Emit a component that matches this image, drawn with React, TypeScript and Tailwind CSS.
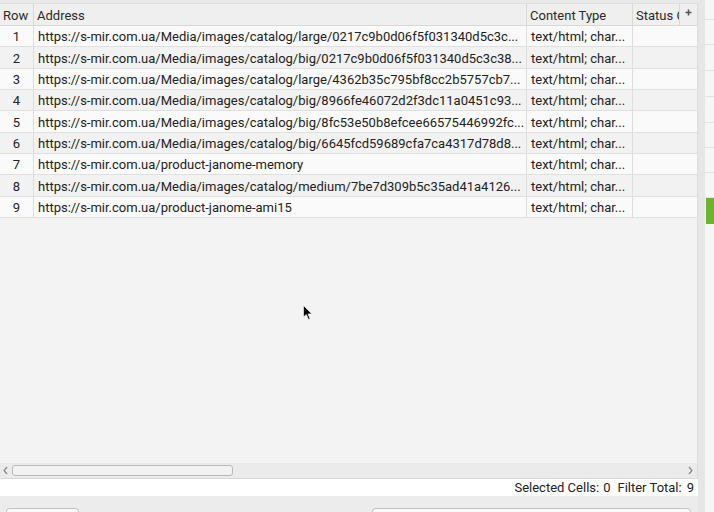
import React from "react";

const rows: { n: number; url: string; h: string }[] = [
  { n: 1, url: "https://s-mir.com.ua/Media/images/catalog/large/0217c9b0d06f5f031340d5c3c...", h: "h-[21px]" },
  { n: 2, url: "https://s-mir.com.ua/Media/images/catalog/big/0217c9b0d06f5f031340d5c3c38...", h: "h-[22px]" },
  { n: 3, url: "https://s-mir.com.ua/Media/images/catalog/large/4362b35c795bf8cc2b5757cb7...", h: "h-[21px]" },
  { n: 4, url: "https://s-mir.com.ua/Media/images/catalog/big/8966fe46072d2f3dc11a0451c93...", h: "h-[21px]" },
  { n: 5, url: "https://s-mir.com.ua/Media/images/catalog/big/8fc53e50b8efcee66575446992fc...", h: "h-[22px]" },
  { n: 6, url: "https://s-mir.com.ua/Media/images/catalog/big/6645fcd59689cfa7ca4317d78d8...", h: "h-[21px]" },
  { n: 7, url: "https://s-mir.com.ua/product-janome-memory", h: "h-[21px]" },
  { n: 8, url: "https://s-mir.com.ua/Media/images/catalog/medium/7be7d309b5c35ad41a4126...", h: "h-[22px]" },
  { n: 9, url: "https://s-mir.com.ua/product-janome-ami15", h: "h-[21px]" },
];

export default function App() {
  return (
    <div
      className="relative w-[714px] h-[512px] overflow-hidden bg-[#ececec] flex text-[13px] text-[#222]"
      style={{ fontFamily: "Roboto, 'Liberation Sans', sans-serif" }}
    >
      {/* main panel */}
      <div className="w-[698px] h-[512px] flex flex-col">
        <div className="h-[4px] shrink-0 bg-[#e9e9e9] border-b border-[#dedede]" />
        <div className="flex-1 min-h-0 flex flex-col bg-[#f3f3f3] border-r border-[#dcdcdc]">
          {/* header */}
          <div className="h-[22px] shrink-0 flex bg-[#efefef] border-b border-[#d8d8d8] text-[#2a2a2a] leading-[23px]">
            <div className="w-[34px] pl-[3px] border-r border-[#d8d8d8]">Row</div>
            <div className="w-[493px] pl-[3px] border-r border-[#d8d8d8]">Address</div>
            <div className="w-[106px] pl-[3px] border-r border-[#d8d8d8]">Content Type</div>
            <div className="w-[47px] pl-[3px] overflow-hidden whitespace-nowrap border-r border-[#d8d8d8]">Status C</div>
            <div className="flex-1 flex items-start justify-center pt-[5px]">
              <svg width="7" height="7" viewBox="0 0 7 7">
                <path d="M3.5 0.5V6.5M0.5 3.5H6.5" stroke="#555" strokeWidth="1.6" />
              </svg>
            </div>
          </div>
          {/* rows */}
          {rows.map((r) => (
            <div
              key={r.n}
              className={`${r.h} shrink-0 flex pt-[2px] border-b border-[#e0e0e0] whitespace-nowrap ${r.n % 2 === 1 ? "bg-[#fafafa]" : "bg-[#f2f2f2]"}`}
            >
              <div className="w-[34px] flex items-center justify-center border-r border-[#dedede] -mt-[2px] pt-[2px]">{r.n}</div>
              <div className="w-[493px] pl-[4px] flex items-center overflow-hidden border-r border-[#dedede] -mt-[2px] pt-[2px]">{r.url}</div>
              <div className="w-[106px] pl-[4px] flex items-center overflow-hidden border-r border-[#dedede] -mt-[2px] pt-[2px]">text/html; char...</div>
              <div className="flex-1" />
            </div>
          ))}
          <div className="flex-1" />
          {/* horizontal scrollbar */}
          <div className="h-[16px] shrink-0 flex items-center bg-[#ebebeb] border-b border-[#d6d6d6]">
            <svg className="ml-[2px]" width="7" height="9" viewBox="0 0 7 9">
              <path d="M5 1L2 4.5L5 8" stroke="#888" strokeWidth="1.2" fill="none" />
            </svg>
            <div className="ml-[3px] w-[221px] h-[11px] rounded-[3px] border border-[#b8b8b8] bg-[#f2f2f2]" />
            <div className="flex-1" />
            <svg className="mr-[3px]" width="7" height="9" viewBox="0 0 7 9">
              <path d="M2 1L5 4.5L2 8" stroke="#888" strokeWidth="1.2" fill="none" />
            </svg>
          </div>
        </div>
        {/* status bar */}
        <div className="h-[17px] shrink-0 bg-white flex items-center justify-end pr-[4px] text-[13px] text-[#222] whitespace-nowrap">
          <span>Selected Cells:</span>
          <span className="ml-[4px]">0</span>
          <span className="ml-[7px]">Filter Total:</span>
          <span className="ml-[5px]">9</span>
        </div>
        {/* bottom area */}
        <div className="h-[16px] shrink-0 flex items-start pt-[12px] bg-[#ececec]">
          <div className="ml-[6px] w-[73px] h-[4px] rounded-t-[4px] border border-b-0 border-[#c4c4c4] bg-[#f9f9f9]" />
          <div className="ml-[293px] w-[319px] h-[4px] rounded-t-[4px] border border-b-0 border-[#c4c4c4] bg-[#f9f9f9]" />
        </div>
      </div>
      {/* splitter */}
      <div className="w-[7px] h-full bg-[#e6e6e6]" />
      {/* right panel */}
      <div className="flex-1 h-full bg-[#f6f6f6] flex flex-col">
        <div className="h-[20px] border-b border-[#e2e2e2]" />
        <div className="h-[25px] border-b border-[#e2e2e2]" />
        <div className="h-[26px] border-b border-[#e2e2e2]" />
        <div className="h-[26px] border-b border-[#e2e2e2]" />
        <div className="h-[26px] border-b border-[#e2e2e2]" />
        <div className="h-[25px] border-b border-[#e2e2e2]" />
        <div className="h-[25px] border-b border-[#e2e2e2]" />
        <div className="h-[25px] border-b border-[#e2e2e2]" />
        <div className="h-[26px] ml-[1px] bg-[#6db32e]" />
        <div className="flex-1" />
      </div>
      {/* mouse cursor */}
      <svg className="absolute left-[303px] top-[305px]" width="10" height="16" viewBox="0 0 10 16">
        <path d="M0.5 0.5V12L3.3 9.4L5.5 14.5L7 13.8L5 8.9H8.8Z" fill="#000" stroke="#fff" strokeWidth="0.6" />
      </svg>
    </div>
  );
}
